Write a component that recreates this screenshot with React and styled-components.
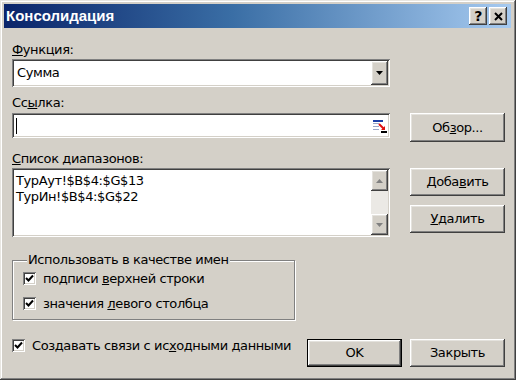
import React from 'react';
import styled, { createGlobalStyle } from 'styled-components';

const GlobalStyle = createGlobalStyle`
  html, body { margin: 0; padding: 0; background: #d4d0c8; }
  body { font-family: "DejaVu Sans", Tahoma, sans-serif; }
`;

const raised = `
  box-shadow: inset -1px -1px #404040, inset 1px 1px #fff,
    inset -2px -2px #808080, inset 2px 2px #e4e2dd;
`;

const sunken = `
  box-shadow: inset 1px 1px #808080, inset -1px -1px #fff,
    inset 2px 2px #404040, inset -2px -2px #d4d0c8;
`;

const Window = styled.div`
  width: 516px;
  height: 380px;
  box-sizing: border-box;
  background: #d4d0c8;
  padding: 4px 5px 3px 4px;
  box-shadow: inset -1px -1px #404040, inset 1px 1px #e8e6e1,
    inset -2px -2px #808080, inset 2px 2px #fff;
  display: flex;
  flex-direction: column;
  font: 13px/16px "DejaVu Sans", Tahoma, sans-serif;
  letter-spacing: -0.4px;
  color: #000;
`;

const TitleBar = styled.div`
  height: 24px;
  display: flex;
  align-items: center;
  justify-content: space-between;
  padding: 0 4px 0 2px;
  background: linear-gradient(to right, #0a246a 0%, #3a6ea5 45%, #a6caf0 100%);
`;

const Title = styled.div`
  color: #fff;
  font: bold 15px/18px "Liberation Sans", Arial, sans-serif;
  letter-spacing: 0;
`;

const TitleButtons = styled.div`
  display: flex;
  gap: 2px;
`;

const TitleButton = styled.div`
  width: 18px;
  height: 18px;
  background: #d4d0c8;
  ${raised}
  display: flex;
  align-items: center;
  justify-content: center;
  font: bold 14px/14px "DejaVu Sans", sans-serif;
`;

const Body = styled.div`
  padding: 14px 6px 0 8px;
  display: flex;
  flex-direction: column;
`;

const Label = styled.div`
  margin-top: ${p => p.$top || 0}px;
  height: 16px;
`;

const Row = styled.div`
  display: flex;
  align-items: flex-start;
  gap: 20px;
  margin-top: ${p => p.$top || 0}px;
`;

const Field = styled.div`
  width: 378px;
  height: ${p => p.$h}px;
  box-sizing: border-box;
  background: #fff;
  ${sunken}
  display: flex;
  align-items: ${p => (p.$list ? 'stretch' : 'center')};
  padding: 2px;
`;

const FieldText = styled.div`
  flex: 1;
  padding: ${p => (p.$list ? '3px 2px' : '0 3px')};
  font-size: 13px;
`;

const Caret = styled.div`
  width: 1px;
  height: 16px;
  background: #000;
  margin-left: 2px;
`;

const SideButton = styled.div`
  width: 17px;
  align-self: stretch;
  background: #d4d0c8;
  ${raised}
  display: flex;
  align-items: center;
  justify-content: center;
`;

const RefIcon = styled.div`
  width: 17px;
  align-self: stretch;
  display: flex;
  align-items: center;
  justify-content: center;
  background: #fff;
`;

const Scrollbar = styled.div`
  width: 17px;
  display: flex;
  flex-direction: column;
  background: #ebe9e5;
`;

const ScrollButton = styled(SideButton)`
  height: 21px;
  align-self: auto;
  width: 17px;
`;

const Track = styled.div`
  flex: 1;
`;

const Button = styled.div`
  width: 95px;
  height: ${p => p.$h || 28}px;
  box-sizing: border-box;
  background: #d4d0c8;
  display: flex;
  align-items: center;
  justify-content: center;
  margin-top: ${p => p.$top || 0}px;
  ${p => (p.$default
    ? `border: 1px solid #000;
       box-shadow: inset -1px -1px #404040, inset 1px 1px #fff,
         inset -2px -2px #808080, inset 2px 2px #e4e2dd;`
    : raised)}
`;

const ButtonColumn = styled.div`
  display: flex;
  flex-direction: column;
  gap: 9px;
`;

const Group = styled.fieldset`
  margin: 15px 0 0 0;
  width: 283px;
  box-sizing: border-box;
  border: 1px solid #808080;
  box-shadow: inset 1px 1px #fff, 1px 1px #fff;
  padding: 2px 0 7px 10px;
  display: flex;
  flex-direction: column;
  gap: 8px;
`;

const Legend = styled.legend`
  padding: 0 1px;
  margin-left: 4px;
  background: #d4d0c8;
  line-height: 16px;
`;

const CheckRow = styled.div`
  display: flex;
  align-items: center;
  gap: 7px;
  height: 17px;
  flex: ${p => (p.$grow ? 1 : 'none')};
  margin-top: ${p => p.$top || 0}px;
`;

const Box = styled.div`
  width: 13px;
  height: 13px;
  box-sizing: border-box;
  background: #fff;
  ${sunken}
  display: flex;
  align-items: center;
  justify-content: center;
`;

const BottomRow = styled.div`
  display: flex;
  align-items: flex-start;
  margin-top: 17px;
`;

const BottomButtons = styled.div`
  display: flex;
  gap: 8px;
  margin-top: 2px;
`;

const CheckMark = () => (
  <Box>
    <svg width="9" height="9" viewBox="0 0 9 9">
      <polyline points="1,4 3.5,6.5 8,1.5" fill="none" stroke="#000" strokeWidth="2" />
    </svg>
  </Box>
);

const Check = ({ children, grow }) => (
  <CheckRow $grow={grow}>
    <CheckMark />
    <span>{children}</span>
  </CheckRow>
);

const Arrow = ({ up, color = '#000' }) => (
  <svg width="7" height="4" viewBox="0 0 7 4">
    <polygon points={up ? '3.5,0 7,4 0,4' : '0,0 7,0 3.5,4'} fill={color} />
  </svg>
);

const App = () => (
  <>
    <GlobalStyle />
    <Window>
      <TitleBar>
        <Title>Консолидация</Title>
        <TitleButtons>
          <TitleButton>?</TitleButton>
          <TitleButton>
            <svg width="9" height="9" viewBox="0 0 9 9">
              <path d="M1 1 L8 8 M8 1 L1 8" stroke="#000" strokeWidth="2" />
            </svg>
          </TitleButton>
        </TitleButtons>
      </TitleBar>
      <Body>
        <Label><u>Ф</u>ункция:</Label>
        <Row $top={1}>
          <Field $h={28}>
            <FieldText>Сумма</FieldText>
            <SideButton><Arrow /></SideButton>
          </Field>
        </Row>
        <Label $top={8}>Сс<u>ы</u>лка:</Label>
        <Row $top={2}>
          <Field $h={25}>
            <Caret />
            <FieldText />
            <RefIcon>
              <svg width="16" height="16" viewBox="0 0 16 16">
                <rect x="1" y="2" width="10" height="2" fill="#1c3fa8" />
                <rect x="1" y="5" width="6" height="1" fill="#9aa6c8" />
                <rect x="1" y="8" width="6" height="1" fill="#9aa6c8" />
                <rect x="1" y="11" width="6" height="1" fill="#9aa6c8" />
                <path d="M7 6 L12 11" stroke="#e01010" strokeWidth="2" />
                <polygon points="13,12 9,12 13,8" fill="#e01010" />
                <rect x="9" y="13" width="6" height="2" fill="#000" />
              </svg>
            </RefIcon>
          </Field>
          <Button $h={29}>Об<u>з</u>ор...</Button>
        </Row>
        <Label $top={9}><u>С</u>писок диапазонов:</Label>
        <Row $top={1}>
          <Field $h={69} $list>
            <FieldText $list>
              ТурАут!$B$4:$G$13<br />
              ТурИн!$B$4:$G$22
            </FieldText>
            <Scrollbar>
              <ScrollButton><Arrow up color="#808080" /></ScrollButton>
              <Track />
              <ScrollButton><Arrow color="#808080" /></ScrollButton>
            </Scrollbar>
          </Field>
          <ButtonColumn>
            <Button>Доба<u>в</u>ить</Button>
            <Button><u>У</u>далить</Button>
          </ButtonColumn>
        </Row>
        <Group>
          <Legend>Использовать в качестве имен</Legend>
          <Check>подписи <u>в</u>ерхней строки</Check>
          <Check>значения <u>л</u>евого столбца</Check>
        </Group>
        <BottomRow>
          <Check grow>Создавать связи с ис<u>х</u>одными данными</Check>
          <BottomButtons>
            <Button $default>OK</Button>
            <Button>Закрыть</Button>
          </BottomButtons>
        </BottomRow>
      </Body>
    </Window>
  </>
);

export default App;
